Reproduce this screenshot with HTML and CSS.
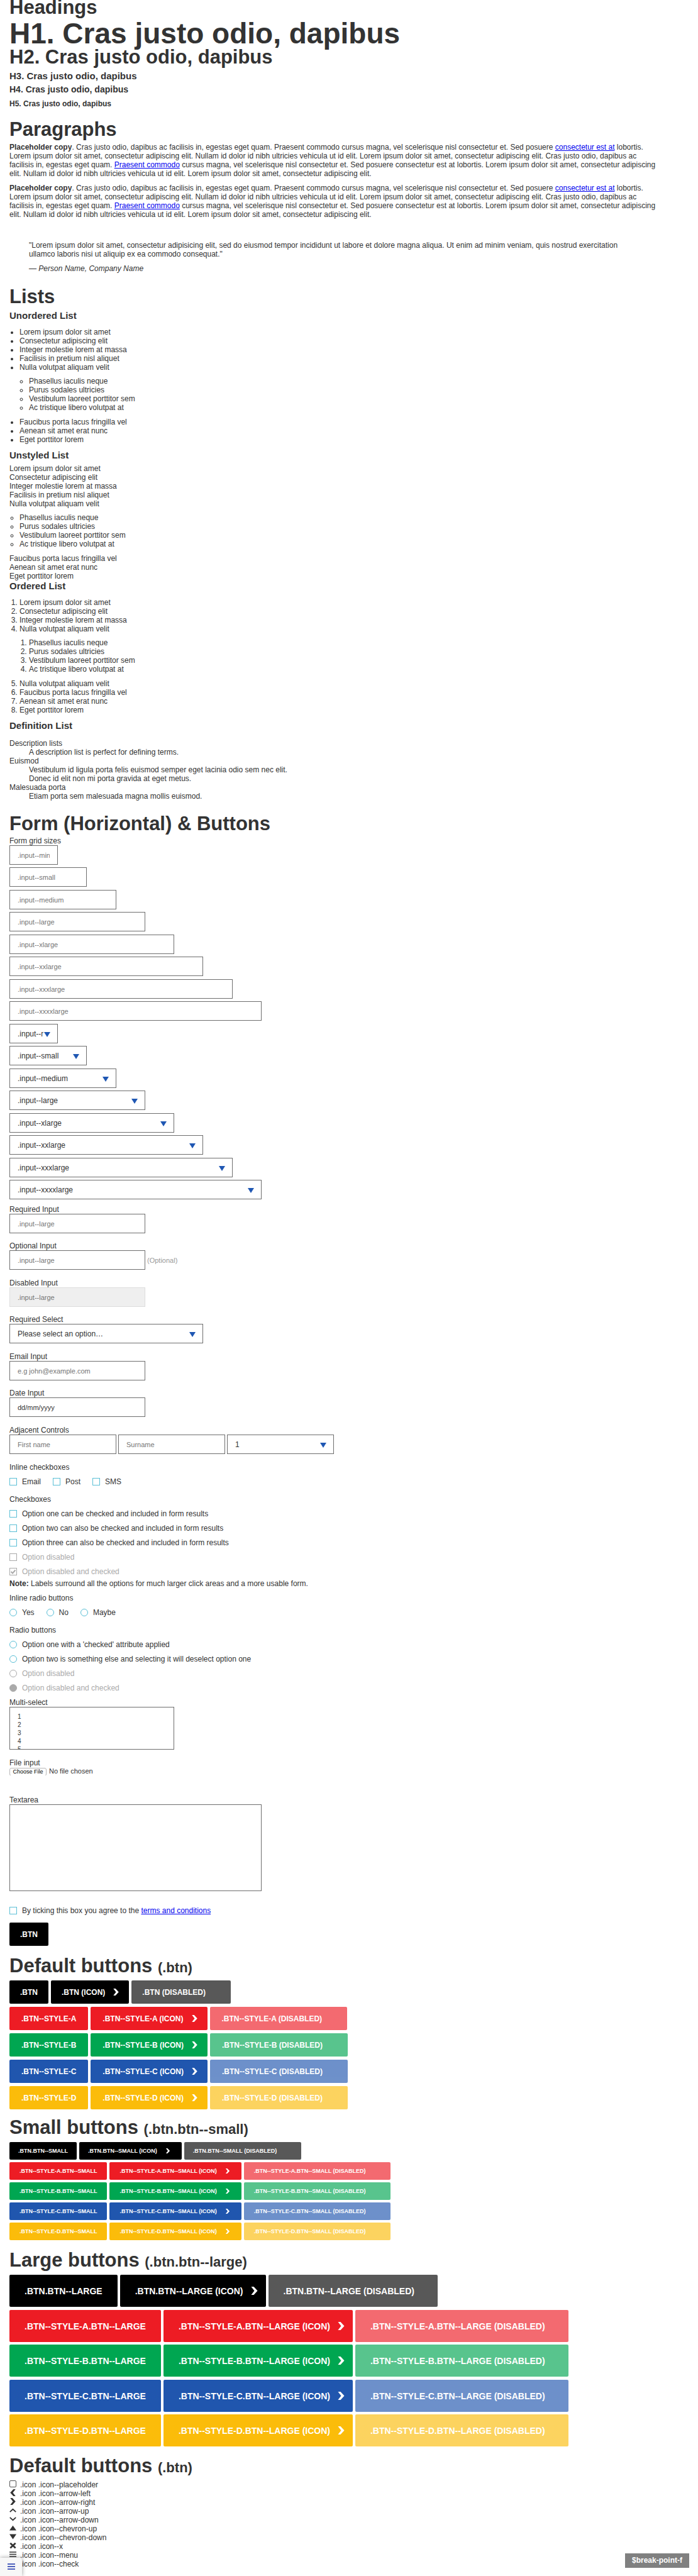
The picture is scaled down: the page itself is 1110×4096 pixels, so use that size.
FILE: index.html
```html
<!DOCTYPE html>
<html lang="en">
<head>
<meta charset="utf-8">
<meta name="viewport" content="width=device-width, initial-scale=1">
<title>Style guide</title>
<link rel="stylesheet" href="styles.css">
</head>
<body>
<svg class="sprite" aria-hidden="true">
  <symbol id="i-placeholder" viewBox="0 0 14 14"><rect x=".6" y=".6" width="12.8" height="12.8" rx="2" fill="none" stroke="currentColor" stroke-width="1.1"/></symbol>
  <symbol id="i-left" viewBox="0 0 14 14"><path d="M12.4 0H8L1.6 7 8 14h4.4L7 7z"/></symbol>
  <symbol id="i-right" viewBox="0 0 14 14"><path d="M1.6 0H6l6.4 7L6 14H1.6L7 7z"/></symbol>
  <symbol id="i-up" viewBox="0 0 14 14"><path d="M1 10.4 7 4.8l6 5.6" fill="none" stroke="currentColor" stroke-width="2.3"/></symbol>
  <symbol id="i-down" viewBox="0 0 14 14"><path d="M1 3.6 7 9.2l6-5.6" fill="none" stroke="currentColor" stroke-width="2.3"/></symbol>
  <symbol id="i-tri-up" viewBox="0 0 14 14"><path d="M7 2.2 14 12H0z"/></symbol>
  <symbol id="i-tri-down" viewBox="0 0 14 14"><path d="M0 2h14L7 12z"/></symbol>
  <symbol id="i-x" viewBox="0 0 14 14"><path d="M1.7 2.3 12.3 12M12.3 2.3 1.7 12" fill="none" stroke="currentColor" stroke-width="3.4"/></symbol>
  <symbol id="i-menu" viewBox="0 0 14 14"><path d="M0 1.5h14v2H0zM0 6h14v2H0zM0 10.5h14v2H0z"/></symbol>
  <symbol id="i-check" viewBox="0 0 14 14"><path d="M1.5 7.5 5.5 11l7-8" fill="none" stroke="currentColor" stroke-width="3"/></symbol>
</svg>

<main class="page">
  <section class="headings">
    <h2 class="title">Headings</h2>
    <h1 class="h1">H1. Cras justo odio, dapibus</h1>
    <h2 class="h2">H2. Cras justo odio, dapibus</h2>
    <h3 class="h3">H3. Cras justo odio, dapibus</h3>
    <h4 class="h4">H4. Cras justo odio, dapibus</h4>
    <h5 class="h5">H5. Cras justo odio, dapibus</h5>
  </section>

  <section class="copy">
    <h2 class="title">Paragraphs</h2>
    <p><strong>Placeholder copy</strong>. Cras justo odio, dapibus ac facilisis in, egestas eget quam. Praesent commodo cursus magna, vel scelerisque nisl consectetur et. Sed posuere <a href="#">consectetur est at</a> lobortis. Lorem ipsum dolor sit amet, consectetur adipiscing elit. Nullam id dolor id nibh ultricies vehicula ut id elit. Lorem ipsum dolor sit amet, consectetur adipiscing elit. Cras justo odio, dapibus ac facilisis in, egestas eget quam. <a href="#">Praesent commodo</a> cursus magna, vel scelerisque nisl consectetur et. Sed posuere consectetur est at lobortis. Lorem ipsum dolor sit amet, consectetur adipiscing elit. Nullam id dolor id nibh ultricies vehicula ut id elit. Lorem ipsum dolor sit amet, consectetur adipiscing elit.</p>
    <p><strong>Placeholder copy</strong>. Cras justo odio, dapibus ac facilisis in, egestas eget quam. Praesent commodo cursus magna, vel scelerisque nisl consectetur et. Sed posuere <a href="#">consectetur est at</a> lobortis. Lorem ipsum dolor sit amet, consectetur adipiscing elit. Nullam id dolor id nibh ultricies vehicula ut id elit. Lorem ipsum dolor sit amet, consectetur adipiscing elit. Cras justo odio, dapibus ac facilisis in, egestas eget quam. <a href="#">Praesent commodo</a> cursus magna, vel scelerisque nisl consectetur et. Sed posuere consectetur est at lobortis. Lorem ipsum dolor sit amet, consectetur adipiscing elit. Nullam id dolor id nibh ultricies vehicula ut id elit. Lorem ipsum dolor sit amet, consectetur adipiscing elit.</p>
    <blockquote>
      <p>"Lorem ipsum dolor sit amet, consectetur adipisicing elit, sed do eiusmod tempor incididunt ut labore et dolore magna aliqua. Ut enim ad minim veniam, quis nostrud exercitation ullamco laboris nisi ut aliquip ex ea commodo consequat."</p>
      <footer>— <cite>Person Name, Company Name</cite></footer>
    </blockquote>
  </section>

  <section class="lists">
    <h2 class="title">Lists</h2>
    <h3 class="h3">Unordered List</h3>
    <ul>
      <li>Lorem ipsum dolor sit amet</li>
      <li>Consectetur adipiscing elit</li>
      <li>Integer molestie lorem at massa</li>
      <li>Facilisis in pretium nisl aliquet</li>
      <li>Nulla volutpat aliquam velit
        <ul>
          <li>Phasellus iaculis neque</li>
          <li>Purus sodales ultricies</li>
          <li>Vestibulum laoreet porttitor sem</li>
          <li>Ac tristique libero volutpat at</li>
        </ul>
      </li>
      <li>Faucibus porta lacus fringilla vel</li>
      <li>Aenean sit amet erat nunc</li>
      <li>Eget porttitor lorem</li>
    </ul>
    <h3 class="h3">Unstyled List</h3>
    <ul class="unstyled">
      <li>Lorem ipsum dolor sit amet</li>
      <li>Consectetur adipiscing elit</li>
      <li>Integer molestie lorem at massa</li>
      <li>Facilisis in pretium nisl aliquet</li>
      <li>Nulla volutpat aliquam velit
        <ul>
          <li>Phasellus iaculis neque</li>
          <li>Purus sodales ultricies</li>
          <li>Vestibulum laoreet porttitor sem</li>
          <li>Ac tristique libero volutpat at</li>
        </ul>
      </li>
      <li>Faucibus porta lacus fringilla vel</li>
      <li>Aenean sit amet erat nunc</li>
      <li>Eget porttitor lorem</li>
    </ul>
    <h3 class="h3 h3--tight">Ordered List</h3>
    <ol>
      <li>Lorem ipsum dolor sit amet</li>
      <li>Consectetur adipiscing elit</li>
      <li>Integer molestie lorem at massa</li>
      <li>Nulla volutpat aliquam velit
        <ol>
          <li>Phasellus iaculis neque</li>
          <li>Purus sodales ultricies</li>
          <li>Vestibulum laoreet porttitor sem</li>
          <li>Ac tristique libero volutpat at</li>
        </ol>
      </li>
      <li>Nulla volutpat aliquam velit</li>
      <li>Faucibus porta lacus fringilla vel</li>
      <li>Aenean sit amet erat nunc</li>
      <li>Eget porttitor lorem</li>
    </ol>
    <h3 class="h3">Definition List</h3>
    <dl>
      <dt>Description lists</dt>
      <dd>A description list is perfect for defining terms.</dd>
      <dt>Euismod</dt>
      <dd>Vestibulum id ligula porta felis euismod semper eget lacinia odio sem nec elit.</dd>
      <dd>Donec id elit non mi porta gravida at eget metus.</dd>
      <dt>Malesuada porta</dt>
      <dd>Etiam porta sem malesuada magna mollis euismod.</dd>
    </dl>
  </section>

  <form class="form">
    <h2 class="title">Form (Horizontal) &amp; Buttons</h2>
    <label class="form-label" for="grid-mini">Form grid sizes</label>
    <div class="grid-sizes">
      <input class="input input--mini" id="grid-mini" type="text" placeholder=".input--mini">
      <input class="input input--small" type="text" placeholder=".input--small" aria-label="Small input">
      <input class="input input--medium" type="text" placeholder=".input--medium" aria-label="Medium input">
      <input class="input input--large" type="text" placeholder=".input--large" aria-label="Large input">
      <input class="input input--xlarge" type="text" placeholder=".input--xlarge" aria-label="X large input">
      <input class="input input--xxlarge" type="text" placeholder=".input--xxlarge" aria-label="XX large input">
      <input class="input input--xxxlarge" type="text" placeholder=".input--xxxlarge" aria-label="XXX large input">
      <input class="input input--xxxxlarge" type="text" placeholder=".input--xxxxlarge" aria-label="XXXX large input">
      <select class="input select input--mini" aria-label="Mini select"><option>.input--mini</option></select>
      <select class="input select input--small" aria-label="Small select"><option>.input--small</option></select>
      <select class="input select input--medium" aria-label="Medium select"><option>.input--medium</option></select>
      <select class="input select input--large" aria-label="Large select"><option>.input--large</option></select>
      <select class="input select input--xlarge" aria-label="X large select"><option>.input--xlarge</option></select>
      <select class="input select input--xxlarge" aria-label="XX large select"><option>.input--xxlarge</option></select>
      <select class="input select input--xxxlarge" aria-label="XXX large select"><option>.input--xxxlarge</option></select>
      <select class="input select input--xxxxlarge" aria-label="XXXX large select"><option>.input--xxxxlarge</option></select>
    </div>

    <div class="fields">
      <div class="field">
        <label class="form-label" for="required">Required Input</label>
        <div class="controls"><input class="input input--large" id="required" type="text" placeholder=".input--large"></div>
      </div>
      <div class="field">
        <label class="form-label" for="optional">Optional Input</label>
        <div class="controls"><input class="input input--large" id="optional" type="text" placeholder=".input--large"><span class="hint">(Optional)</span></div>
      </div>
      <div class="field">
        <label class="form-label" for="disabled">Disabled Input</label>
        <div class="controls"><input class="input input--large" id="disabled" type="text" placeholder=".input--large" disabled></div>
      </div>
      <div class="field">
        <label class="form-label" for="req-select">Required Select</label>
        <div class="controls"><select class="input select input--xxlarge" id="req-select"><option>Please select an option…</option></select></div>
      </div>
      <div class="field">
        <label class="form-label" for="email">Email Input</label>
        <div class="controls"><input class="input input--large" id="email" type="email" placeholder="e.g john@example.com"></div>
      </div>
      <div class="field">
        <label class="form-label" for="date">Date Input</label>
        <div class="controls"><input class="input input--date input--large" id="date" type="text" placeholder="dd/mm/yyyy"></div>
      </div>
      <div class="field">
        <label class="form-label" for="first">Adjacent Controls</label>
        <div class="controls">
          <input class="input input--medium" id="first" type="text" placeholder="First name">
          <input class="input input--medium" type="text" placeholder="Surname" aria-label="Surname">
          <select class="input select input--medium" aria-label="Number"><option>1</option></select>
        </div>
      </div>
    </div>

    <p class="form-label group-label group-label--first">Inline checkboxes</p>
    <div class="inline-options">
      <label class="option"><input type="checkbox">Email</label>
      <label class="option"><input type="checkbox">Post</label>
      <label class="option"><input type="checkbox">SMS</label>
    </div>
    <p class="form-label group-label">Checkboxes</p>
    <div class="options">
      <label class="option"><input type="checkbox">Option one can be checked and included in form results</label>
      <label class="option"><input type="checkbox">Option two can also be checked and included in form results</label>
      <label class="option"><input type="checkbox">Option three can also be checked and included in form results</label>
      <label class="option option--disabled"><input type="checkbox" disabled>Option disabled</label>
      <label class="option option--disabled"><input type="checkbox" disabled checked>Option disabled and checked</label>
    </div>
    <p class="note"><strong>Note:</strong> Labels surround all the options for much larger click areas and a more usable form.</p>
    <p class="form-label group-label">Inline radio buttons</p>
    <div class="inline-options">
      <label class="option"><input type="radio" name="answer">Yes</label>
      <label class="option"><input type="radio" name="answer">No</label>
      <label class="option"><input type="radio" name="answer">Maybe</label>
    </div>
    <p class="form-label group-label">Radio buttons</p>
    <div class="options">
      <label class="option"><input type="radio" name="choice">Option one with a 'checked' attribute applied</label>
      <label class="option"><input type="radio" name="choice">Option two is something else and selecting it will deselect option one</label>
      <label class="option option--disabled"><input type="radio" name="off" disabled>Option disabled</label>
      <label class="option option--disabled"><input type="radio" name="off-checked" disabled checked>Option disabled and checked</label>
    </div>

    <div class="multi-field">
      <label class="form-label" for="multi">Multi-select</label>
      <select class="input multi input--xlarge" id="multi" multiple>
        <option>1</option><option>2</option><option>3</option><option>4</option><option>5</option>
      </select>
    </div>
    <div class="file-field">
      <label class="form-label" for="file">File input</label>
      <input class="file" id="file" type="file">
    </div>
    <div class="textarea-field">
      <label class="form-label" for="text">Textarea</label>
      <textarea class="input textarea input--xxxxlarge" id="text"></textarea>
    </div>
    <label class="option terms"><input type="checkbox"><span>By ticking this box you agree to the <a href="#">terms and conditions</a></span></label>
    <div class="btn-row submit"><button class="btn" type="button">.btn</button></div>
  </form>

  <section class="buttons">
    <h2 class="title">Default buttons <small>(.btn)</small></h2>
    <div class="btn-row"><button class="btn">.btn</button><button class="btn btn--icon">.btn (icon)<svg><use href="#i-right"/></svg></button><button class="btn" disabled>.btn (disabled)</button></div>
    <div class="btn-row btn-row--styled"><button class="btn btn--a">.btn--style-a</button><button class="btn btn--a btn--icon">.btn--style-a (icon)<svg><use href="#i-right"/></svg></button><button class="btn btn--a" disabled>.btn--style-a (disabled)</button></div>
    <div class="btn-row btn-row--styled"><button class="btn btn--b">.btn--style-b</button><button class="btn btn--b btn--icon">.btn--style-b (icon)<svg><use href="#i-right"/></svg></button><button class="btn btn--b" disabled>.btn--style-b (disabled)</button></div>
    <div class="btn-row btn-row--styled"><button class="btn btn--c">.btn--style-c</button><button class="btn btn--c btn--icon">.btn--style-c (icon)<svg><use href="#i-right"/></svg></button><button class="btn btn--c" disabled>.btn--style-c (disabled)</button></div>
    <div class="btn-row btn-row--styled"><button class="btn btn--d">.btn--style-d</button><button class="btn btn--d btn--icon">.btn--style-d (icon)<svg><use href="#i-right"/></svg></button><button class="btn btn--d" disabled>.btn--style-d (disabled)</button></div>
  </section>

  <section class="buttons buttons--small">
    <h2 class="title">Small buttons <small>(.btn.btn--small)</small></h2>
    <div class="btn-row"><button class="btn">.btn.btn--small</button><button class="btn btn--icon">.btn.btn--small (icon)<svg><use href="#i-right"/></svg></button><button class="btn" disabled>.btn.btn--small (disabled)</button></div>
    <div class="btn-row btn-row--styled"><button class="btn btn--a">.btn--style-a.btn--small</button><button class="btn btn--a btn--icon">.btn--style-a.btn--small (icon)<svg><use href="#i-right"/></svg></button><button class="btn btn--a" disabled>.btn--style-a.btn--small (disabled)</button></div>
    <div class="btn-row btn-row--styled"><button class="btn btn--b">.btn--style-b.btn--small</button><button class="btn btn--b btn--icon">.btn--style-b.btn--small (icon)<svg><use href="#i-right"/></svg></button><button class="btn btn--b" disabled>.btn--style-b.btn--small (disabled)</button></div>
    <div class="btn-row btn-row--styled"><button class="btn btn--c">.btn--style-c.btn--small</button><button class="btn btn--c btn--icon">.btn--style-c.btn--small (icon)<svg><use href="#i-right"/></svg></button><button class="btn btn--c" disabled>.btn--style-c.btn--small (disabled)</button></div>
    <div class="btn-row btn-row--styled"><button class="btn btn--d">.btn--style-d.btn--small</button><button class="btn btn--d btn--icon">.btn--style-d.btn--small (icon)<svg><use href="#i-right"/></svg></button><button class="btn btn--d" disabled>.btn--style-d.btn--small (disabled)</button></div>
  </section>

  <section class="buttons buttons--large">
    <h2 class="title">Large buttons <small>(.btn.btn--large)</small></h2>
    <div class="btn-row"><button class="btn">.btn.btn--large</button><button class="btn btn--icon">.btn.btn--large (icon)<svg><use href="#i-right"/></svg></button><button class="btn" disabled>.btn.btn--large (disabled)</button></div>
    <div class="btn-row"><button class="btn btn--a">.btn--style-a.btn--large</button><button class="btn btn--a btn--icon">.btn--style-a.btn--large (icon)<svg><use href="#i-right"/></svg></button><button class="btn btn--a" disabled>.btn--style-a.btn--large (disabled)</button></div>
    <div class="btn-row"><button class="btn btn--b">.btn--style-b.btn--large</button><button class="btn btn--b btn--icon">.btn--style-b.btn--large (icon)<svg><use href="#i-right"/></svg></button><button class="btn btn--b" disabled>.btn--style-b.btn--large (disabled)</button></div>
    <div class="btn-row"><button class="btn btn--c">.btn--style-c.btn--large</button><button class="btn btn--c btn--icon">.btn--style-c.btn--large (icon)<svg><use href="#i-right"/></svg></button><button class="btn btn--c" disabled>.btn--style-c.btn--large (disabled)</button></div>
    <div class="btn-row"><button class="btn btn--d">.btn--style-d.btn--large</button><button class="btn btn--d btn--icon">.btn--style-d.btn--large (icon)<svg><use href="#i-right"/></svg></button><button class="btn btn--d" disabled>.btn--style-d.btn--large (disabled)</button></div>
  </section>

  <section class="icons">
    <h2 class="title">Default buttons <small>(.btn)</small></h2>
    <ul class="icon-list">
      <li><svg><use href="#i-placeholder"/></svg>.icon .icon--placeholder</li>
      <li><svg><use href="#i-left"/></svg>.icon .icon--arrow-left</li>
      <li><svg><use href="#i-right"/></svg>.icon .icon--arrow-right</li>
      <li><svg><use href="#i-up"/></svg>.icon .icon--arrow-up</li>
      <li><svg><use href="#i-down"/></svg>.icon .icon--arrow-down</li>
      <li><svg><use href="#i-tri-up"/></svg>.icon .icon--chevron-up</li>
      <li><svg><use href="#i-tri-down"/></svg>.icon .icon--chevron-down</li>
      <li><svg><use href="#i-x"/></svg>.icon .icon--x</li>
      <li><svg><use href="#i-menu"/></svg>.icon .icon--menu</li>
      <li><svg><use href="#i-check"/></svg>.icon .icon--check</li>
    </ul>
  </section>
</main>

<button class="menu-tab" aria-label="Menu"><svg viewBox="0 0 12 11"><path d="M0 0h12v2H0zM0 4h12v2H0zM0 8h12v2H0z"/></svg></button>
<div class="breakpoint">$break-point-f</div>
</body>
</html>
```
FILE: styles.css
```css
* { box-sizing: border-box; }

body {
  margin: 0;
  color: #333;
  background: #fff;
  font: 12px/14px "Liberation Sans", Arial, sans-serif;
}

h1, h2, h3, h4, h5, p, ul, ol, dl, dd, blockquote { margin: 0; }
a { color: #00e; }
svg { fill: currentColor; }
.sprite { display: none; }

.page { padding: 0 15px 11px; }

/* Headings */
.title, .h2 { font-size: 31px; line-height: 24px; }
.title small { font-size: 22px; line-height: 16px; }
.h1 { margin-top: 6px; font-size: 46px; line-height: 46px; }
.h2 { margin-top: 3px; }
.h3 { margin-top: 10px; font-size: 15px; line-height: 16px; }
.h4 { margin-top: 5px; font-size: 14px; line-height: 16px; }
.h5 { margin-top: 8px; font-size: 12px; line-height: 14px; }

/* Paragraphs */
.copy { padding-top: 22px; }
.copy > p { margin-top: 9px; padding-right: 48px; }
blockquote { margin: 35px 74px 0 31px; }
blockquote footer { margin-top: 9px; }

/* Lists */
.lists { padding-top: 26px; }
ul, ol { margin-top: 11px; padding-left: 16px; }
li > ul, li > ol { margin: 8px 0 9px; padding-left: 15px; }
.unstyled { margin-top: 6px; padding-left: 0; list-style: none; }
.unstyled ul { padding-left: 16px; list-style: circle; }
.h3--tight { margin-top: 1px; }
dl { margin-top: 13px; }
dd { margin-left: 31px; }

/* Form */
.form { padding-top: 25px; }
.form-label { display: block; line-height: 14px; }
.form > .title + .form-label { margin-top: 8px; }

.grid-sizes { display: flex; flex-direction: column; align-items: flex-start; gap: 4px; }
.grid-sizes > :nth-child(even) { margin-bottom: 1px; }

.input {
  display: block;
  height: 31px;
  max-width: 100%;
  margin: 0;
  padding: 0 12px;
  border: 1px solid #6e6e6e;
  border-radius: 0;
  background: #fff;
  color: #333;
  font: 11px/14px "Liberation Sans", Arial, sans-serif;
}
.input::placeholder { color: #757575; opacity: 1; }
.input:disabled { border-color: #ddd; background: #efefef; }
.input--date::placeholder { color: #333; }
.input--mini { width: 77px; }
.input--small { width: 123px; }
.input--medium { width: 170px; }
.input--large { width: 216px; }
.input--xlarge { width: 262px; }
.input--xxlarge { width: 308px; }
.input--xxxlarge { width: 355px; }
.input--xxxxlarge { width: 401px; }

.select {
  appearance: none;
  padding-right: 22px;
  font-size: 12px;
  background: #fff url("data:image/svg+xml,%3Csvg xmlns='http://www.w3.org/2000/svg' width='10' height='8'%3E%3Cpath d='M0 0h10L5 8z' fill='%231f57b3'/%3E%3C/svg%3E") no-repeat right 11px top 12px;
}

.fields { display: flex; flex-direction: column; gap: 13px; margin-top: 8px; }
.field:nth-child(even) { margin-bottom: 1px; }
.controls { display: flex; align-items: center; gap: 3px; }
.hint { color: #999; font-size: 11px; }

.group-label { margin-top: 10px; }
.group-label--first { margin-top: 14px; }
.options, .inline-options { display: flex; margin-top: 4px; }
.options { flex-direction: column; align-items: flex-start; }
.inline-options { gap: 19px; }
.option { display: flex; align-items: center; gap: 8px; height: 23px; }
.option--disabled { color: #aaa; }
.option input {
  appearance: none;
  flex: none;
  width: 12px;
  height: 12px;
  margin: 0;
  border: 1px solid #5bbfd6;
  background: #fff;
}
.option input[type="radio"] { border-radius: 50%; }
.option input:disabled { border-color: #aaa; }
.option input[type="radio"]:disabled:checked { background: #aaa; }
.option input[type="checkbox"]:disabled:checked {
  background: url("data:image/svg+xml,%3Csvg xmlns='http://www.w3.org/2000/svg' width='10' height='10'%3E%3Cpath d='M1.5 5 4 7.5 8.5 2.5' fill='none' stroke='%23aaa' stroke-width='2'/%3E%3C/svg%3E") no-repeat center;
}
.note { margin-top: 1px; }
.form .note + .group-label { margin-top: 9px; }

.multi-field { margin-top: 5px; }
.multi { height: 68px; padding: 9px 10px 0; overflow: hidden; font-size: 10px; }
.multi option { display: block; height: 13px; min-height: 0; padding: 0 2px; font-size: 10px; }

.file-field { margin-top: 14px; }
.file { display: block; height: 13px; font: 11px/13px "Liberation Sans", Arial, sans-serif; }
.file::file-selector-button {
  width: 59px;
  height: 13px;
  margin: 0 4px 0 0;
  padding: 0;
  border: 1px solid #b8b8b8;
  border-radius: 3px;
  background: #fff;
  color: #000;
  font: 9px/11px "Liberation Sans", Arial, sans-serif;
}
.textarea-field { margin-top: 32px; }
.textarea { height: 138px; resize: none; }
.terms { margin-top: 19px; }
.submit { margin-top: 8px; }

/* Buttons */
.btn-row { display: flex; flex-wrap: wrap; gap: 4px; }
.btn {
  display: flex;
  align-items: center;
  gap: 12px;
  height: 37px;
  padding: 0 17px;
  border: 0;
  border-radius: 2px;
  background: #000;
  color: #fff;
  font: bold 12px/14px "Liberation Sans", Arial, sans-serif;
  text-transform: uppercase;
}
.btn svg { width: 11px; height: 11px; }
.btn-row--styled .btn { padding: 0 19px; }
.btn-row .btn--icon { padding-right: 15px; }
.btn-row .btn:disabled { padding-right: 40px; opacity: .65; }
.btn--a { background: #ed1c24; }
.btn--b { background: #00a651; }
.btn--c { background: #2056ae; }
.btn--d { background: #fbbc0a; }

.buttons { padding-top: 20px; }
.buttons .title { margin-bottom: 11px; }
.buttons .btn-row + .btn-row { margin-top: 5px; }

.buttons--small { padding-top: 17px; }
.buttons--small .btn-row + .btn-row { margin-top: 4px; }
.buttons--small .btn { height: 28px; gap: 13px; padding: 0 14px; font-size: 9px; }
.buttons--small .btn-row--styled .btn { padding: 0 16px; }
.buttons--small .btn svg { width: 8px; height: 8px; }
.buttons--small .btn-row .btn--icon { padding-right: 18px; }
.buttons--small .btn-row .btn:disabled { padding-right: 39px; }

.buttons--large .btn-row + .btn-row { margin-top: 4px; }
.buttons--large .btn-row:nth-child(even) { padding-bottom: 1px; }
.buttons--large .btn { height: 51px; gap: 11px; padding: 0 24px; font-size: 14px; }
.buttons--large .btn svg { width: 13px; height: 13px; }
.buttons--large .btn-row .btn--icon { padding-right: 12px; }
.buttons--large .btn-row .btn:disabled { padding-right: 37px; }

/* Icons */
.icons { padding-top: 18px; }
.icon-list { padding: 0; list-style: none; }
.icon-list li { display: flex; align-items: flex-start; gap: 6px; }
.icon-list svg { width: 11px; height: 11px; }

.menu-tab {
  position: fixed;
  left: 0;
  bottom: 0;
  display: flex;
  align-items: center;
  justify-content: center;
  width: 35px;
  height: 29px;
  padding: 0;
  border: 0;
  border-radius: 0 4px 0 0;
  background: #f7f7f7;
  color: #4f62bd;
  box-shadow: 0 0 6px rgba(0, 0, 0, .4);
}
.menu-tab svg { width: 12px; height: 11px; }
.breakpoint {
  position: fixed;
  right: 14px;
  bottom: 13px;
  padding: 4px 11px 5px;
  background: #808080;
  color: #fff;
  font-weight: bold;
}
```
